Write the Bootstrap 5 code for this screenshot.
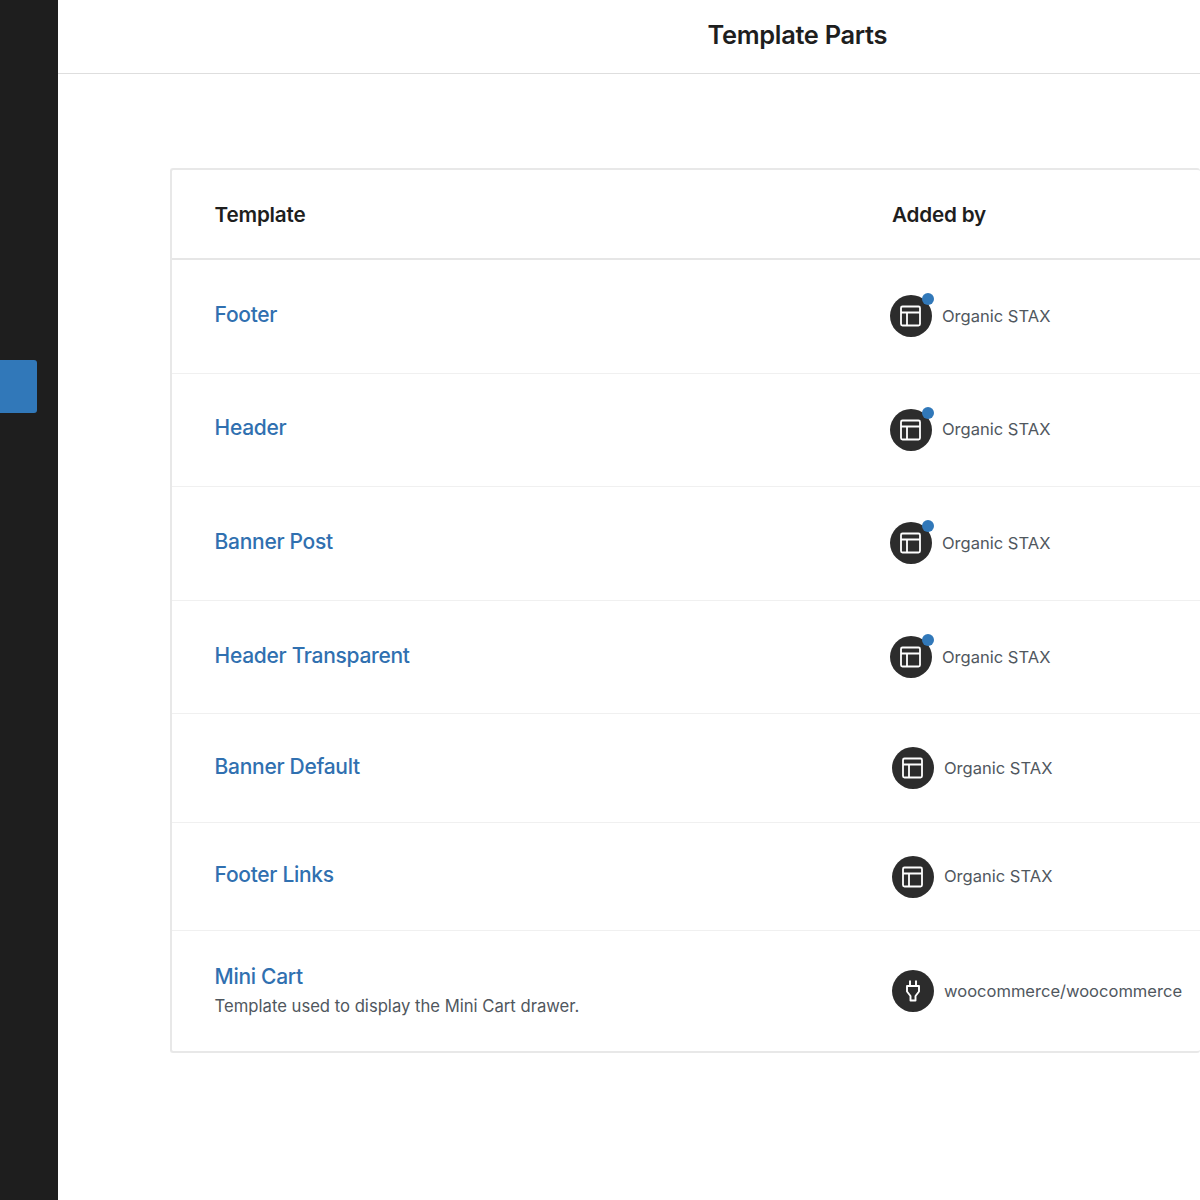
<!doctype html>
<html lang="en">
<head>
<meta charset="utf-8">
<title>Template Parts</title>
<link href="https://cdn.jsdelivr.net/npm/bootstrap@5.3.0/dist/css/bootstrap.min.css" rel="stylesheet">
<style>
html,body{height:1200px;overflow:hidden;}
body{font-family:Inter,"Liberation Sans",sans-serif;background:#fff;color:#1e1e1e;}
.side-rail{width:58px;height:1200px;background:#1e1e1e;flex:none;padding-top:360px;}
.side-active{width:37px;height:53px;background:#3178b9;border-radius:0 3px 3px 0;}
.page-main{width:1142px;flex:none;}
.top-bar{height:74px;border-bottom:1px solid #dedede;padding-left:649.5px;padding-top:18px;}
.top-title{font-size:25.4px;font-weight:600;line-height:33px;letter-spacing:-.3px;margin:0;color:#1e1e1e;}
.parts-wrap{padding:94px 0 0 112px;}
.parts-box{border:2px solid #e8e8e8;border-right:0;border-radius:3px;height:885px;}
.parts-head{height:90px;border-bottom:2px solid #e6e6e6;font-size:20.7px;font-weight:600;letter-spacing:-.2px;padding-left:42.6px;padding-top:2px;}
.col-name{width:677.4px;flex:none;}
.part-row{border-bottom:1px solid #f0f0f0;padding-left:42.6px;}
.part-row:last-child{border-bottom:0;}
.h-tall{height:113.6px;}
.h-short{height:108.5px;}
.h-last{height:121px;}
.part-link{font-size:21px;font-weight:500;line-height:28px;letter-spacing:-.3px;color:#3070b0;text-decoration:none;display:block;}
.part-desc{font-size:16.65px;line-height:24px;color:#50575e;margin:3px 0 0;}
.author{gap:10px;font-size:16.55px;color:#50575e;}
.ava{width:42px;height:42px;border-radius:50%;background:#2c2c2c;flex:none;position:relative;}
.ava svg{display:block;}
.dot{position:absolute;top:-2px;right:-2px;width:12px;height:12px;border-radius:50%;background:#3178b9;}
.shift-l{margin-left:-2px;}
.name-up{margin-top:-3px;}
.name-last{margin-top:-2px;}
.author-last{margin-top:-1px;}
</style>
</head>
<body>
<div class="d-flex">
  <div class="side-rail"><div class="side-active"></div></div>
  <div class="page-main">
    <header class="top-bar"><h1 class="top-title">Template Parts</h1></header>
    <div class="parts-wrap">
      <div class="parts-box">
        <div class="parts-head d-flex align-items-center"><div class="col-name">Template</div><div>Added by</div></div>

        <div class="part-row h-tall d-flex align-items-center">
          <div class="col-name name-up"><a class="part-link" href="#">Footer</a></div>
          <div class="author shift-l d-flex align-items-center"><span class="ava"><svg width="42" height="42" viewBox="0 0 42 42" fill="none" stroke="#fff" stroke-width="1.8"><rect x="11" y="11.5" width="19" height="19" rx="1.5"/><path d="M11 17.5h19M17 17.5v13"/></svg><span class="dot"></span></span><span>Organic STAX</span></div>
        </div>
        <div class="part-row h-tall d-flex align-items-center">
          <div class="col-name name-up"><a class="part-link" href="#">Header</a></div>
          <div class="author shift-l d-flex align-items-center"><span class="ava"><svg width="42" height="42" viewBox="0 0 42 42" fill="none" stroke="#fff" stroke-width="1.8"><rect x="11" y="11.5" width="19" height="19" rx="1.5"/><path d="M11 17.5h19M17 17.5v13"/></svg><span class="dot"></span></span><span>Organic STAX</span></div>
        </div>
        <div class="part-row h-tall d-flex align-items-center">
          <div class="col-name name-up"><a class="part-link" href="#">Banner Post</a></div>
          <div class="author shift-l d-flex align-items-center"><span class="ava"><svg width="42" height="42" viewBox="0 0 42 42" fill="none" stroke="#fff" stroke-width="1.8"><rect x="11" y="11.5" width="19" height="19" rx="1.5"/><path d="M11 17.5h19M17 17.5v13"/></svg><span class="dot"></span></span><span>Organic STAX</span></div>
        </div>
        <div class="part-row h-tall d-flex align-items-center">
          <div class="col-name name-up"><a class="part-link" href="#">Header Transparent</a></div>
          <div class="author shift-l d-flex align-items-center"><span class="ava"><svg width="42" height="42" viewBox="0 0 42 42" fill="none" stroke="#fff" stroke-width="1.8"><rect x="11" y="11.5" width="19" height="19" rx="1.5"/><path d="M11 17.5h19M17 17.5v13"/></svg><span class="dot"></span></span><span>Organic STAX</span></div>
        </div>
        <div class="part-row h-short d-flex align-items-center">
          <div class="col-name name-up"><a class="part-link" href="#">Banner Default</a></div>
          <div class="author d-flex align-items-center"><span class="ava"><svg width="42" height="42" viewBox="0 0 42 42" fill="none" stroke="#fff" stroke-width="1.8"><rect x="11" y="11.5" width="19" height="19" rx="1.5"/><path d="M11 17.5h19M17 17.5v13"/></svg></span><span>Organic STAX</span></div>
        </div>
        <div class="part-row h-short d-flex align-items-center">
          <div class="col-name name-up"><a class="part-link" href="#">Footer Links</a></div>
          <div class="author d-flex align-items-center"><span class="ava"><svg width="42" height="42" viewBox="0 0 42 42" fill="none" stroke="#fff" stroke-width="1.8"><rect x="11" y="11.5" width="19" height="19" rx="1.5"/><path d="M11 17.5h19M17 17.5v13"/></svg></span><span>Organic STAX</span></div>
        </div>
        <div class="part-row h-last d-flex align-items-center">
          <div class="col-name name-last"><a class="part-link" href="#">Mini Cart</a><p class="part-desc">Template used to display the Mini Cart drawer.</p></div>
          <div class="author author-last d-flex align-items-center"><span class="ava"><svg width="42" height="42" viewBox="0 0 42 42" fill="none" stroke="#fff" stroke-width="1.9" stroke-linejoin="round"><path d="M18 10.5v5.5M24 10.5v5.5M15 16h12v5.5l-3.5 4.5v4.5h-5V26L15 21.5z"/></svg></span><span>woocommerce/woocommerce</span></div>
        </div>
      </div>
    </div>
  </div>
</div>
<script src="https://cdn.jsdelivr.net/npm/bootstrap@5.3.0/dist/js/bootstrap.bundle.min.js"></script>
</body>
</html>
